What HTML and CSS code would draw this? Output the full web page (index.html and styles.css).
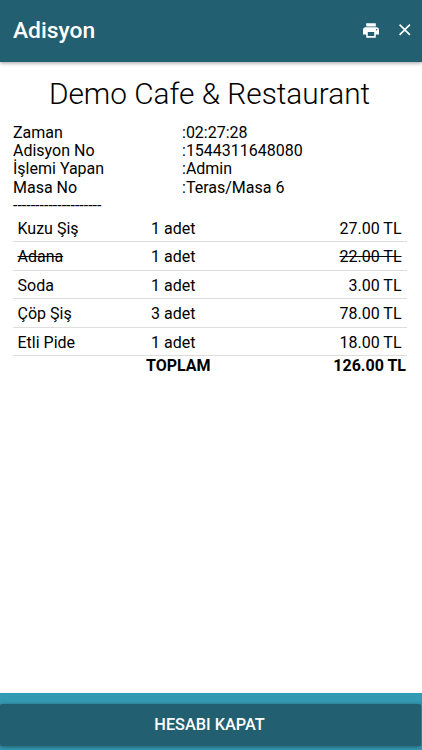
FILE: index.html
```html
<!DOCTYPE html>
<html lang="tr">
<head>
<meta charset="utf-8">
<title>Adisyon</title>
<link rel="stylesheet" href="styles.css">
</head>
<body>
<header class="toolbar">
  <h1 class="toolbar-title">Adisyon</h1>
  <svg class="icon-print" viewBox="2 3 20 18"><path d="M19 8H5c-1.66 0-3 1.34-3 3v6h4v4h12v-4h4v-6c0-1.66-1.34-3-3-3zm-3 11H8v-5h8v5zm3-7c-.55 0-1-.45-1-1s.45-1 1-1 1 .45 1 1-.45 1-1 1zm-1-9H6v4h12V3z"/></svg>
  <svg class="icon-close" viewBox="5 5 14 14"><path d="M19 6.41 17.59 5 12 10.59 6.41 5 5 6.41 10.59 12 5 17.59 6.41 19 12 13.41 17.59 19 19 17.59 13.41 12z"/></svg>
</header>
<main class="content">
  <h2 class="venue"><span>Demo Cafe &amp; Restaurant</span></h2>
  <dl class="info">
    <dt>Zaman</dt><dd>:02:27:28</dd>
    <dt>Adisyon No</dt><dd>:1544311648080</dd>
    <dt>İşlemi Yapan</dt><dd>:Admin</dd>
    <dt>Masa No</dt><dd>:Teras/Masa 6</dd>
  </dl>
  <div class="divider">--------------------</div>
  <div class="items">
    <div class="item"><span>Kuzu Şiş</span><span>1 adet</span><span class="price">27.00 TL</span></div>
    <div class="item cancelled"><span><s>Adana</s></span><span>1 adet</span><span class="price"><s>22.00 TL</s></span></div>
    <div class="item"><span>Soda</span><span>1 adet</span><span class="price">3.00 TL</span></div>
    <div class="item"><span>Çöp Şiş</span><span>3 adet</span><span class="price">78.00 TL</span></div>
    <div class="item"><span>Etli Pide</span><span>1 adet</span><span class="price">18.00 TL</span></div>
  </div>
  <div class="total"><span>TOPLAM</span><span class="price">126.00 TL</span></div>
</main>
<footer class="footer">
  <button class="close-bill" type="button">HESABI KAPAT</button>
</footer>
</body>
</html>
```
FILE: styles.css
```css
* { box-sizing: border-box; }

body {
  margin: 0;
  height: 750px;
  display: flex;
  flex-direction: column;
  overflow: hidden;
  background: #fff;
  color: #000;
  font: 16px/18.3px Roboto, sans-serif;
}

.toolbar {
  flex: none;
  height: 62px;
  padding: 0 11.5px 2px 13px;
  display: flex;
  align-items: center;
  background: #225f70;
  color: #fff;
  box-shadow: 0 1px 4px rgba(0, 0, 0, .4);
}

.toolbar-title {
  flex: 1;
  margin: 0;
  font-size: 22.8px;
  font-weight: 500;
  line-height: 30px;
  padding-top: 2px;
}

.toolbar svg { fill: #fff; }
.icon-print { width: 16px; height: 15px; margin-right: 20px; }
.icon-close { width: 11.5px; height: 11.5px; }

.content { flex: 1; padding: 13px 16px 0 13px; }

.venue {
  margin: 0 0 10.8px;
  text-align: center;
  font-size: 29.8px;
  font-weight: 300;
  line-height: 38px;
}

.info {
  margin: 0;
  display: grid;
  grid-template-columns: 169px 1fr;
}
.info dd { margin: 0; }

.divider { height: 17px; }

.item {
  display: grid;
  grid-template-columns: 133.5px 1fr 1fr;
  height: 28.4px;
  margin-right: -1px;
  padding: 0 5.5px 0 4.5px;
  border-bottom: 1px solid #dedede;
  line-height: 29px;
}

.price { text-align: right; }

.total {
  display: flex;
  justify-content: space-between;
  padding-left: 133px;
  font-weight: 700;
  line-height: 19px;
}

.footer {
  flex: none;
  height: 57px;
  padding: 11px 1px 4px 0;
  background: #3499b3;
}

.close-bill {
  display: block;
  width: 100%;
  height: 42px;
  padding: 0 2px 0 0;
  border: 0;
  border-radius: 2px;
  background: #225f70;
  box-shadow: 0 1px 4px rgba(0, 0, 0, .4);
  color: #fff;
  font: 500 16.3px/42px Roboto, sans-serif;
}
```
